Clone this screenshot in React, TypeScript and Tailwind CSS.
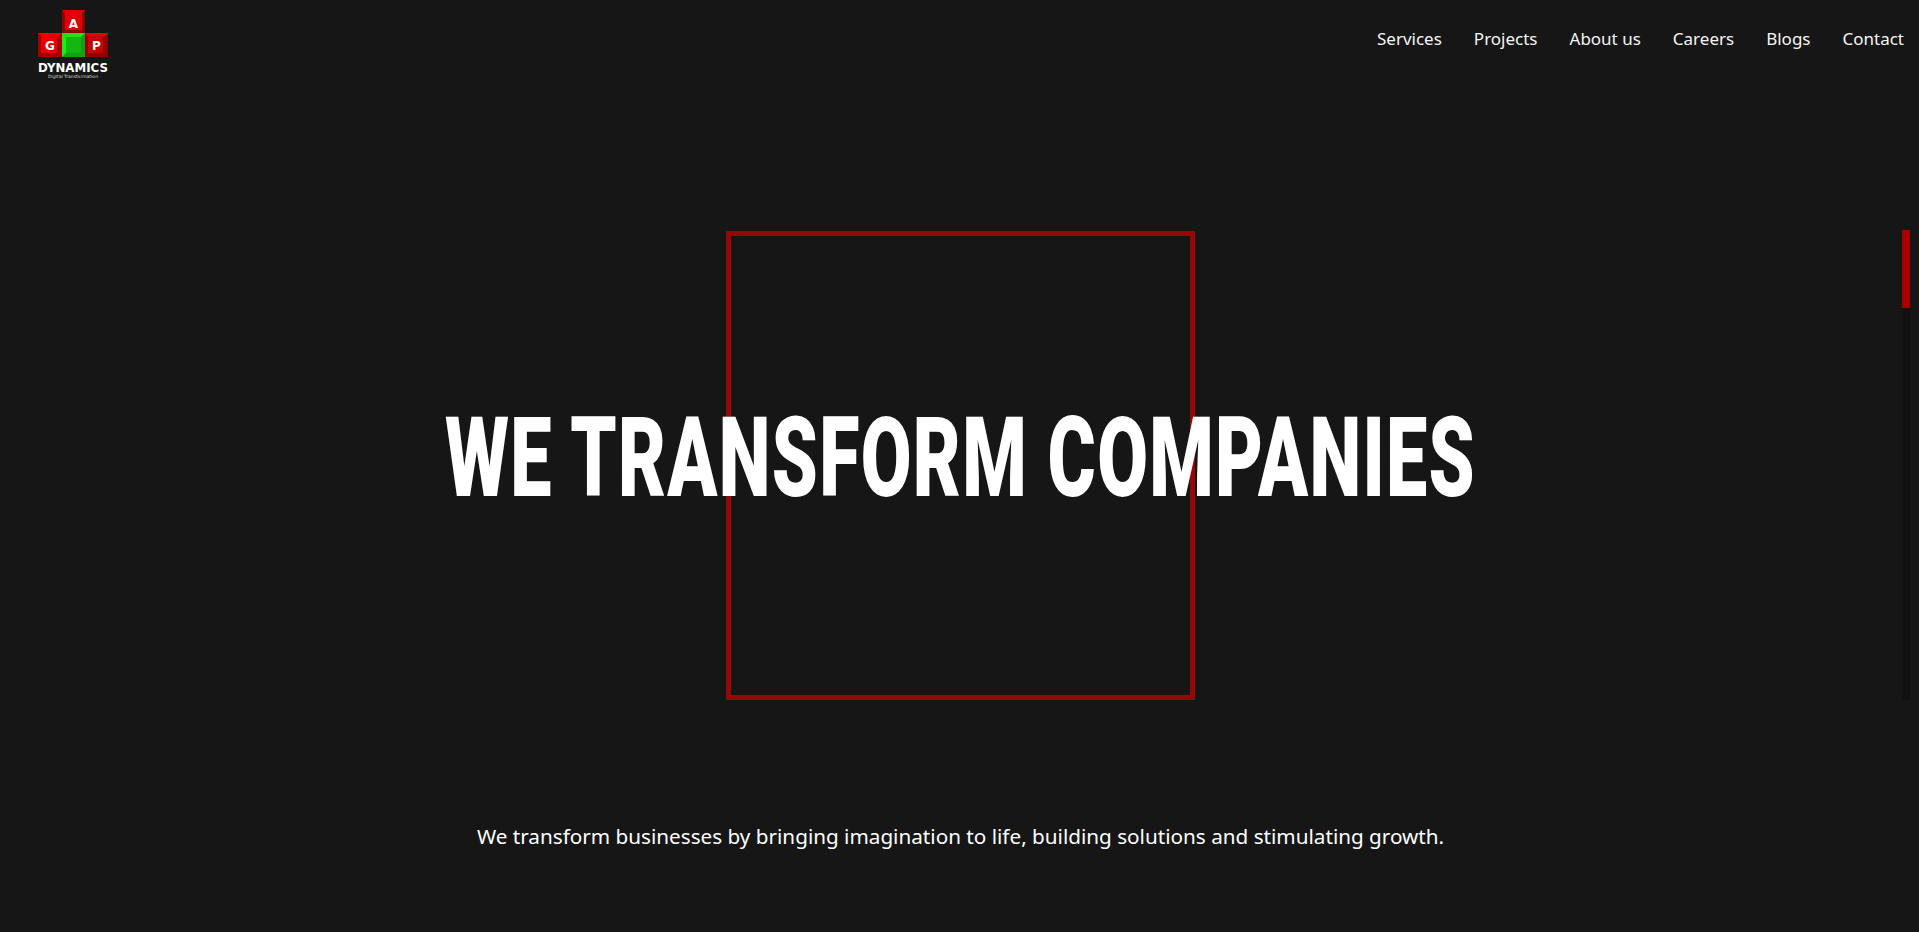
const navLinks = ["Services", "Projects", "About us", "Careers", "Blogs", "Contact"];

function Logo() {
  return (
    <svg width="72" height="70" viewBox="0 0 72 70" className="block">
      {/* top block */}
      <rect x="24" y="0" width="23" height="23" fill="#8f0000" />
      <polygon points="24,0 47,0 42,5 29,5" fill="#e60000" />
      <rect x="27" y="3" width="17" height="17" fill="#e00000" />
      {/* left block */}
      <rect x="0" y="23" width="24" height="24" fill="#a00000" />
      <polygon points="0,23 24,23 19,28 5,28" fill="#ee0000" />
      <rect x="3" y="26" width="16" height="17" fill="#e60000" />
      {/* centre block */}
      <rect x="24" y="23" width="23" height="24" fill="#12a012" />
      <polygon points="24,23 47,23 43,27 28,27" fill="#19e619" />
      <polygon points="24,23 28,27 28,43 24,47" fill="#17ee17" />
      <rect x="28" y="27" width="15" height="16" fill="#13b613" />
      {/* right block */}
      <rect x="47" y="23" width="23" height="24" fill="#8f0000" />
      <polygon points="47,23 70,23 65,28 51,28" fill="#e00000" />
      <rect x="50" y="26" width="15" height="17" fill="#c90000" />
      <g fontFamily="'DejaVu Sans', sans-serif" fontWeight="700" fill="#ffffff" textAnchor="middle">
        <text x="35.5" y="17.5" fontSize="12">A</text>
        <text x="12" y="40" fontSize="12">G</text>
        <text x="58.5" y="40" fontSize="12">P</text>
        <text x="35" y="61.5" fontSize="11.5" textLength="70" lengthAdjust="spacingAndGlyphs">DYNAMICS</text>
        <text x="35" y="67.5" fontSize="4.4" fontWeight="400" fill="#d8d8d8" textLength="50" lengthAdjust="spacingAndGlyphs">Digital Transformation</text>
      </g>
    </svg>
  );
}

export default function App() {
  return (
    <div className="relative h-[932px] overflow-hidden bg-[#161616] text-white font-['Noto_Sans','Open_Sans',sans-serif]">
      <header className="flex items-start justify-between pt-[10px] pl-[38px] pr-[15px]">
        <Logo />
        <nav className="flex gap-[32px] pt-[17px] text-[17px] leading-[24px] text-[#f4f4f4]">
          {navLinks.map((link) => (
            <a key={link} href="#" className="whitespace-nowrap">
              {link}
            </a>
          ))}
        </nav>
      </header>

      {/* Hero: frame and headline share one grid cell */}
      <main className="mt-[151px] flex flex-col items-center pl-[2px]">
        <div className="grid place-items-center">
          <div className="[grid-area:1/1] h-[469px] w-[469px] border-[5px] border-[#960808]" />
          <h1 className="[grid-area:1/1] relative -top-[8px] scale-x-[0.657] whitespace-nowrap font-['Roboto','Liberation_Sans',sans-serif] text-[112px] font-black leading-none tracking-[2px] text-white">
            WE TRANSFORM COMPANIES
          </h1>
        </div>
        <p className="mt-[122px] whitespace-nowrap text-[20.7px] leading-[28px] text-white">
          We transform businesses by bringing imagination to life, building solutions and stimulating growth.
        </p>
      </main>

      {/* Scroll progress rail */}
      <div className="absolute right-[9px] top-[230px] h-[470px] w-[8px] bg-[#111111]">
        <div className="h-[78px] w-full bg-[#a80000]" />
      </div>
    </div>
  );
}
